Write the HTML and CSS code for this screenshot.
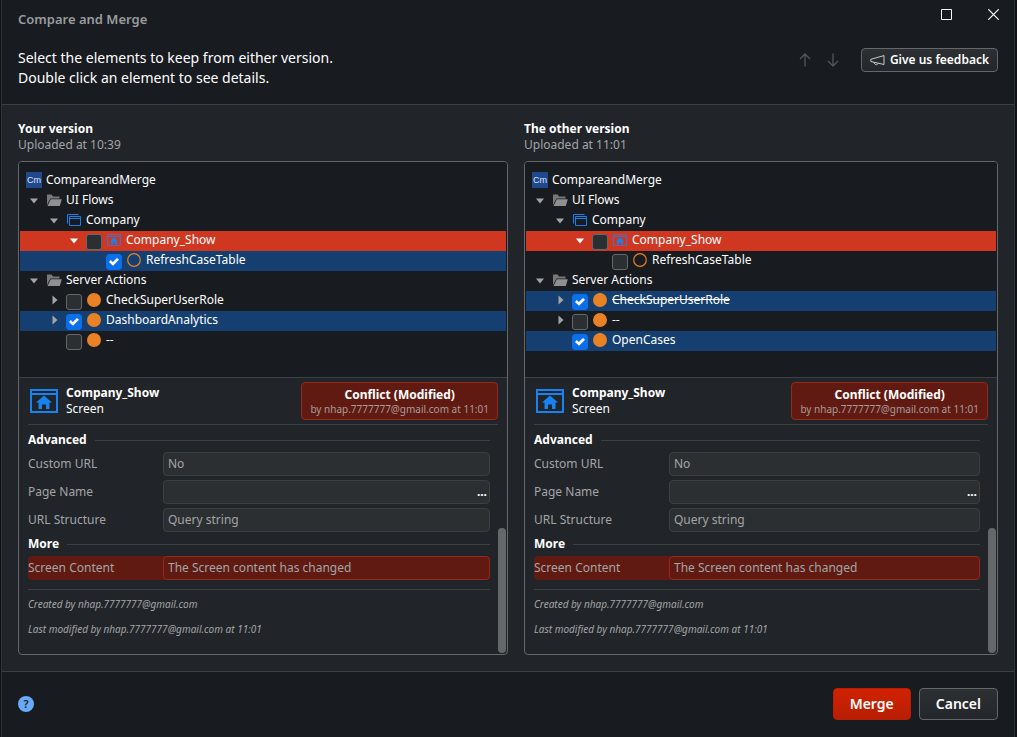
FILE: index.html
```html
<!DOCTYPE html>
<html lang="en">
<head>
<meta charset="utf-8">
<meta name="viewport" content="width=device-width, initial-scale=1">
<title>Compare and Merge</title>
<link rel="stylesheet" href="styles.css">
</head>
<body>
<svg class="sprite" aria-hidden="true">
  <symbol id="i-down" viewBox="0 0 8 6"><path d="M0 0.500h8L4 5.500z" fill="currentColor"/></symbol>
  <symbol id="i-right" viewBox="0 0 6 10"><path d="M0.500 0.500v9L5.500 5z" fill="currentColor"/></symbol>
  <symbol id="i-folder" viewBox="0 0 16 12"><path d="M1 11V0.500H5.500L7 2.500H13.500V4.500H4.500L1 11z" fill="#77797c"/><path d="M4.800 5.200H15.800L13.800 12H1.500z" fill="#8e9092"/></symbol>
  <symbol id="i-flow" viewBox="0 0 14 12"><path d="M0.500 9.500V0.500H11.500M2.500 2.500h11v9h-11zM2.500 4.500h11" fill="none" stroke="#1a7fe8"/></symbol>
  <symbol id="i-screen" viewBox="0 0 28 24"><path d="M1 1h26v22H1z M1 5h26" fill="none" stroke="#1783f0" stroke-width="2"/><path d="M14 6.500 22 13.500H19.500V20H16V15.500H12V20H8.500V13.500H6z" fill="#1783f0"/></symbol>
  <symbol id="i-screen-small" viewBox="0 0 14 12"><path d="M0.500 0.500h13v11h-13zM1 2.500h12" fill="none" stroke="#4a6fc0"/><path d="M7 3.500 11 7.500H9.800V10.500H8V8.500H6V10.500H4.200V7.500H3z" fill="#1783f0"/></symbol>
  <symbol id="i-dot" viewBox="0 0 14 14"><circle cx="7" cy="7" r="7" fill="#e98224"/></symbol>
  <symbol id="i-ring" viewBox="0 0 14 14"><circle cx="7" cy="7" r="6.300" fill="none" stroke="#e98224" stroke-width="1.200"/></symbol>
</svg>
<div class="window">
  <header class="top">
    <div class="titlebar">
      <h1 class="title">Compare and Merge</h1>
      <div class="window-controls">
        <button class="plain" type="button" aria-label="Maximize"><svg width="11" height="11" viewBox="0 0 11 11"><path d="M.5.5h10v10H.5z" fill="none" stroke="#fff"/></svg></button>
        <button class="plain" type="button" aria-label="Close"><svg width="11" height="11" viewBox="0 0 11 11"><path d="M.3.3l10.400 10.400M10.700.3.3 10.700" fill="none" stroke="#fff" stroke-width="1.200"/></svg></button>
      </div>
    </div>
    <div class="intro">
      <p class="instructions">Select the elements to keep from either version.<br>Double click an element to see details.</p>
      <div class="intro-actions">
        <button class="plain arrow" type="button" aria-label="Previous difference"><svg width="12" height="14" viewBox="0 0 12 14"><path d="M6 13.500V1M1 6l5-5 5 5" fill="none" stroke="currentColor" stroke-width="1.300"/></svg></button>
        <button class="plain arrow" type="button" aria-label="Next difference"><svg width="12" height="14" viewBox="0 0 12 14"><path d="M6 .5V13M1 8l5 5 5-5" fill="none" stroke="currentColor" stroke-width="1.300"/></svg></button>
        <button class="btn feedback" type="button"><svg width="15" height="11" viewBox="0 0 15 11"><path d="M14 .5V9.500L.8 6.500V4.300L14 .6M4 7.200c.4 3 3.600 3.400 4.200.9" fill="none" stroke="#c8cacc"/></svg>Give us feedback</button>
      </div>
    </div>
  </header>

  <main class="compare">
    <section class="version">
      <h2 class="version-name">Your version</h2>
      <p class="version-time">Uploaded at 10:39</p>
      <div class="panel">
        <ul class="tree">
          <li class="row"><span class="cell"><span class="module">Cm</span></span><span class="label">CompareandMerge</span></li>
          <li class="row"><span class="cell"><svg class="down"><use href="#i-down"/></svg></span><span class="cell"><svg class="folder"><use href="#i-folder"/></svg></span><span class="label">UI Flows</span></li>
          <li class="row level-1"><span class="cell"><svg class="down"><use href="#i-down"/></svg></span><span class="cell"><svg class="small"><use href="#i-flow"/></svg></span><span class="label">Company</span></li>
          <li class="row level-2 conflict"><span class="cell"><svg class="down"><use href="#i-down"/></svg></span><input class="check" type="checkbox" id="a1"><span class="cell"><svg class="small"><use href="#i-screen-small"/></svg></span><label class="label" for="a1">Company_Show</label></li>
          <li class="row level-4 kept"><input class="check" type="checkbox" id="a2" checked><span class="cell"><svg class="round"><use href="#i-ring"/></svg></span><label class="label" for="a2">RefreshCaseTable</label></li>
          <li class="row"><span class="cell"><svg class="down"><use href="#i-down"/></svg></span><span class="cell"><svg class="folder"><use href="#i-folder"/></svg></span><span class="label">Server Actions</span></li>
          <li class="row level-1"><span class="cell"><svg class="right"><use href="#i-right"/></svg></span><input class="check" type="checkbox" id="a3"><span class="cell"><svg class="round"><use href="#i-dot"/></svg></span><label class="label" for="a3">CheckSuperUserRole</label></li>
          <li class="row level-1 kept"><span class="cell"><svg class="right"><use href="#i-right"/></svg></span><input class="check" type="checkbox" id="a4" checked><span class="cell"><svg class="round"><use href="#i-dot"/></svg></span><label class="label" for="a4">DashboardAnalytics</label></li>
          <li class="row level-2"><input class="check" type="checkbox" id="a5"><span class="cell"><svg class="round"><use href="#i-dot"/></svg></span><label class="label" for="a5">--</label></li>
        </ul>
        <div class="details">
          <div class="element">
            <svg class="element-icon"><use href="#i-screen"/></svg>
            <div class="element-name"><strong>Company_Show</strong><br>Screen</div>
            <div class="badge"><strong>Conflict (Modified)</strong><span>by nhap.7777777@gmail.com at 11:01</span></div>
          </div>
          <div class="scroller">
            <div class="properties">
              <h3 class="group">Advanced</h3>
              <div class="field"><label for="a-url">Custom URL</label><input id="a-url" type="text" value="No" readonly></div>
              <div class="field"><label for="a-page">Page Name</label><div class="picker"><input id="a-page" type="text" readonly><button type="button" aria-label="Edit page name">...</button></div></div>
              <div class="field"><label for="a-struct">URL Structure</label><input id="a-struct" type="text" value="Query string" readonly></div>
              <h3 class="group">More</h3>
              <div class="field changed"><label for="a-content">Screen Content</label><input id="a-content" type="text" value="The Screen content has changed" readonly></div>
              <div class="history"><p>Created by nhap.7777777@gmail.com</p><p>Last modified by nhap.7777777@gmail.com at 11:01</p></div>
            </div>
            <div class="scrollbar"></div>
          </div>
        </div>
      </div>
    </section>

    <section class="version">
      <h2 class="version-name">The other version</h2>
      <p class="version-time">Uploaded at 11:01</p>
      <div class="panel">
        <ul class="tree">
          <li class="row"><span class="cell"><span class="module">Cm</span></span><span class="label">CompareandMerge</span></li>
          <li class="row"><span class="cell"><svg class="down"><use href="#i-down"/></svg></span><span class="cell"><svg class="folder"><use href="#i-folder"/></svg></span><span class="label">UI Flows</span></li>
          <li class="row level-1"><span class="cell"><svg class="down"><use href="#i-down"/></svg></span><span class="cell"><svg class="small"><use href="#i-flow"/></svg></span><span class="label">Company</span></li>
          <li class="row level-2 conflict"><span class="cell"><svg class="down"><use href="#i-down"/></svg></span><input class="check" type="checkbox" id="b1"><span class="cell"><svg class="small"><use href="#i-screen-small"/></svg></span><label class="label" for="b1">Company_Show</label></li>
          <li class="row level-4"><input class="check" type="checkbox" id="b2"><span class="cell"><svg class="round"><use href="#i-ring"/></svg></span><label class="label" for="b2">RefreshCaseTable</label></li>
          <li class="row"><span class="cell"><svg class="down"><use href="#i-down"/></svg></span><span class="cell"><svg class="folder"><use href="#i-folder"/></svg></span><span class="label">Server Actions</span></li>
          <li class="row level-1 kept"><span class="cell"><svg class="right"><use href="#i-right"/></svg></span><input class="check" type="checkbox" id="b3" checked><span class="cell"><svg class="round"><use href="#i-dot"/></svg></span><label class="label removed" for="b3">CheckSuperUserRole</label></li>
          <li class="row level-1"><span class="cell"><svg class="right"><use href="#i-right"/></svg></span><input class="check" type="checkbox" id="b4"><span class="cell"><svg class="round"><use href="#i-dot"/></svg></span><label class="label" for="b4">--</label></li>
          <li class="row level-2 kept"><input class="check" type="checkbox" id="b5" checked><span class="cell"><svg class="round"><use href="#i-dot"/></svg></span><label class="label" for="b5">OpenCases</label></li>
        </ul>
        <div class="details">
          <div class="element">
            <svg class="element-icon"><use href="#i-screen"/></svg>
            <div class="element-name"><strong>Company_Show</strong><br>Screen</div>
            <div class="badge"><strong>Conflict (Modified)</strong><span>by nhap.7777777@gmail.com at 11:01</span></div>
          </div>
          <div class="scroller">
            <div class="properties">
              <h3 class="group">Advanced</h3>
              <div class="field"><label for="b-url">Custom URL</label><input id="b-url" type="text" value="No" readonly></div>
              <div class="field"><label for="b-page">Page Name</label><div class="picker"><input id="b-page" type="text" readonly><button type="button" aria-label="Edit page name">...</button></div></div>
              <div class="field"><label for="b-struct">URL Structure</label><input id="b-struct" type="text" value="Query string" readonly></div>
              <h3 class="group">More</h3>
              <div class="field changed"><label for="b-content">Screen Content</label><input id="b-content" type="text" value="The Screen content has changed" readonly></div>
              <div class="history"><p>Created by nhap.7777777@gmail.com</p><p>Last modified by nhap.7777777@gmail.com at 11:01</p></div>
            </div>
            <div class="scrollbar"></div>
          </div>
        </div>
      </div>
    </section>
  </main>

  <footer class="bottom">
    <button class="help" type="button" aria-label="Help">?</button>
    <div class="bottom-actions">
      <button class="btn large primary" type="button">Merge</button>
      <button class="btn large" type="button">Cancel</button>
    </div>
  </footer>
</div>
</body>
</html>
```

FILE: styles.css
```css
* { box-sizing: border-box; }

body {
  margin: 0;
  background: #101216;
  color: #fff;
  font: 12px/16px "Noto Sans", sans-serif;
}

h1, h2, h3, p, ul { margin: 0; padding: 0; }
button, input { font: inherit; color: inherit; }
svg { display: block; }
.sprite { position: absolute; width: 0; height: 0; }

.window {
  display: flex;
  flex-direction: column;
  min-height: 100vh;
  margin: 0 2px 0 1px;
  border: solid #303338;
  border-width: 0 1px;
  background: #212428;
}

/* Title and instructions */
.top {
  padding: 8px 16px 16px;
  background: #181b1f;
  border-bottom: 1px solid #3d4043;
}
.titlebar, .intro, .intro-actions, .window-controls, .bottom, .bottom-actions {
  display: flex;
  align-items: center;
}
.titlebar, .intro, .bottom { justify-content: space-between; }
.titlebar { height: 22px; align-items: flex-start; }
.title {
  font-size: 13px;
  line-height: 22px;
  font-weight: 600;
  color: #999b9d;
}
.window-controls { gap: 36px; margin: 1px -1px 0 0; }
.plain {
  display: flex;
  padding: 0;
  border: 0;
  background: none;
  color: #53565a;
}
.intro { margin-top: 18px; }
.instructions { font-size: 14px; line-height: 20px; }
.intro-actions { gap: 16px; margin-bottom: -4px; }
.intro { align-items: flex-start; }

.btn {
  display: flex;
  align-items: center;
  justify-content: center;
  gap: 4px;
  height: 24px;
  padding: 0 8px;
  border: 1px solid #65686b;
  border-radius: 4px;
  background: linear-gradient(#2d3033, #23262a);
  font-weight: 600;
}
.feedback { gap: 5px; margin-left: 6px; font-size: 12px; }
.large { height: 32px; padding: 0 16px; font-size: 14px; line-height: 20px; }
.primary {
  border-color: #b81e06;
  background: linear-gradient(#d02202, #b81e02);
}

/* Two versions side by side */
.compare {
  flex: 1;
  display: grid;
  grid-template-columns: 490fr 474fr;
  gap: 16px;
  padding: 16px;
}
.version { display: flex; flex-direction: column; min-width: 0; }
.version-name { font-size: 12px; line-height: 16px; }
.version-time { color: #a3a5a7; }
.panel {
  flex: 1;
  display: flex;
  flex-direction: column;
  margin-top: 8px;
  border: 1px solid #65686b;
  border-radius: 4px;
  overflow: hidden;
}

.tree {
  height: 216px;
  padding: 9px 1px 0;
  list-style: none;
  background: #181b1f;
  border-bottom: 1px solid #3d4043;
}
.row {
  display: flex;
  align-items: center;
  height: 20px;
  padding: 0 4px 2px;
}
.level-1 { padding-left: 24px; }
.level-2 { padding-left: 44px; }
.level-4 { padding-left: 84px; }
.conflict { background: #cf3721; }
.kept { background: #153f70; }
.cell {
  display: flex;
  align-items: center;
  justify-content: center;
  flex: 0 0 20px;
  color: #a3a5a7;
}
.conflict .cell { color: #fff; }
.label { margin-left: 2px; white-space: nowrap; }
.removed { text-decoration: line-through; }
.module {
  width: 16px;
  height: 16px;
  background: #20488c;
  color: #dfe6f2;
  font: 9px/16px "Liberation Sans", sans-serif;
  text-align: center;
}
.down { width: 8px; height: 6px; margin-top: 2px; }
.right { width: 6px; height: 10px; margin-left: 2px; }
.folder { width: 16px; height: 12px; }
.small { width: 14px; height: 12px; }
.round { width: 14px; height: 14px; }
.check {
  appearance: none;
  align-self: flex-start;
  flex: none;
  width: 16px;
  height: 16px;
  margin: 3px 2px 0;
  border: 1px solid #65686b;
  border-radius: 3px;
  background: #2c2f32;
}
.check:checked {
  border-color: #0a6fe8;
  background: #0a6fe8;
}
.check:checked::before {
  content: "";
  display: block;
  width: 10px;
  height: 8px;
  margin: 3px 2px;
  background: #fff;
  clip-path: polygon(0 50%, 18% 26%, 38% 50%, 80% 0, 100% 22%, 40% 98%);
}

/* Element details */
.details { flex: 1; display: flex; flex-direction: column; }
.element {
  display: flex;
  align-items: center;
  height: 47px;
  margin: 0 9px;
  padding: 0 0 1px 2px;
  border-bottom: 1px solid #3d4043;
}
.element-icon { width: 28px; height: 24px; margin-right: 8px; }
.badge {
  display: flex;
  flex-direction: column;
  align-items: center;
  height: 38px;
  margin-left: auto;
  padding: 4px 8px 0;
  border: 1px solid #96291b;
  border-radius: 4px;
  background: #601a12;
}
.badge strong { line-height: 15px; }
.badge span { font-size: 10px; line-height: 14px; color: #aa9a98; }

.scroller { flex: 1; display: flex; }
.properties {
  flex: 1;
  min-width: 0;
  padding: 7px 8px 0 9px;
}
.group {
  display: flex;
  align-items: center;
  gap: 8px;
  margin-bottom: 4px;
  font-size: 12px;
  line-height: 16px;
}
.group::after { content: ""; flex: 1; height: 1px; background: #3d4043; }
.field {
  display: grid;
  grid-template-columns: 135px 1fr;
  align-items: center;
  height: 24px;
  margin-bottom: 4px;
  border-radius: 4px;
  color: #a3a5a7;
}
.field input {
  width: 100%;
  height: 24px;
  min-width: 0;
  padding: 0 4px 2px;
  border: 1px solid #3d4043;
  border-radius: 4px;
  background: #2c2f32;
}
.picker { position: relative; }
.picker button {
  position: absolute;
  top: 0;
  right: 3px;
  height: 24px;
  padding: 0;
  border: 0;
  background: none;
  color: #fff;
  font-weight: 700;
}
.changed, .field.changed input { background: #601a12; }
.field.changed input { border-color: #96291b; }
.history {
  margin-top: 9px;
  padding-top: 6px;
  border-top: 1px solid #3d4043;
  color: #a3a5a7;
  font-size: 10px;
  font-style: italic;
}
.history p { margin-bottom: 9px; }
.scrollbar {
  align-self: flex-end;
  width: 8px;
  height: 125px;
  margin: 0 1px 1px 0;
  border-radius: 4px;
  background: #65686b;
}

/* Footer */
.bottom {
  height: 66px;
  padding: 0 16px 1px;
  background: #181b1f;
  border-top: 1px solid #3d4043;
}
.help {
  width: 16px;
  height: 16px;
  padding: 0;
  border: 0;
  border-radius: 8px;
  background: #68a9f8;
  color: #181b1f;
  font-size: 11px;
  line-height: 16px;
  font-weight: 600;
}
.bottom-actions { gap: 8px; }
```
